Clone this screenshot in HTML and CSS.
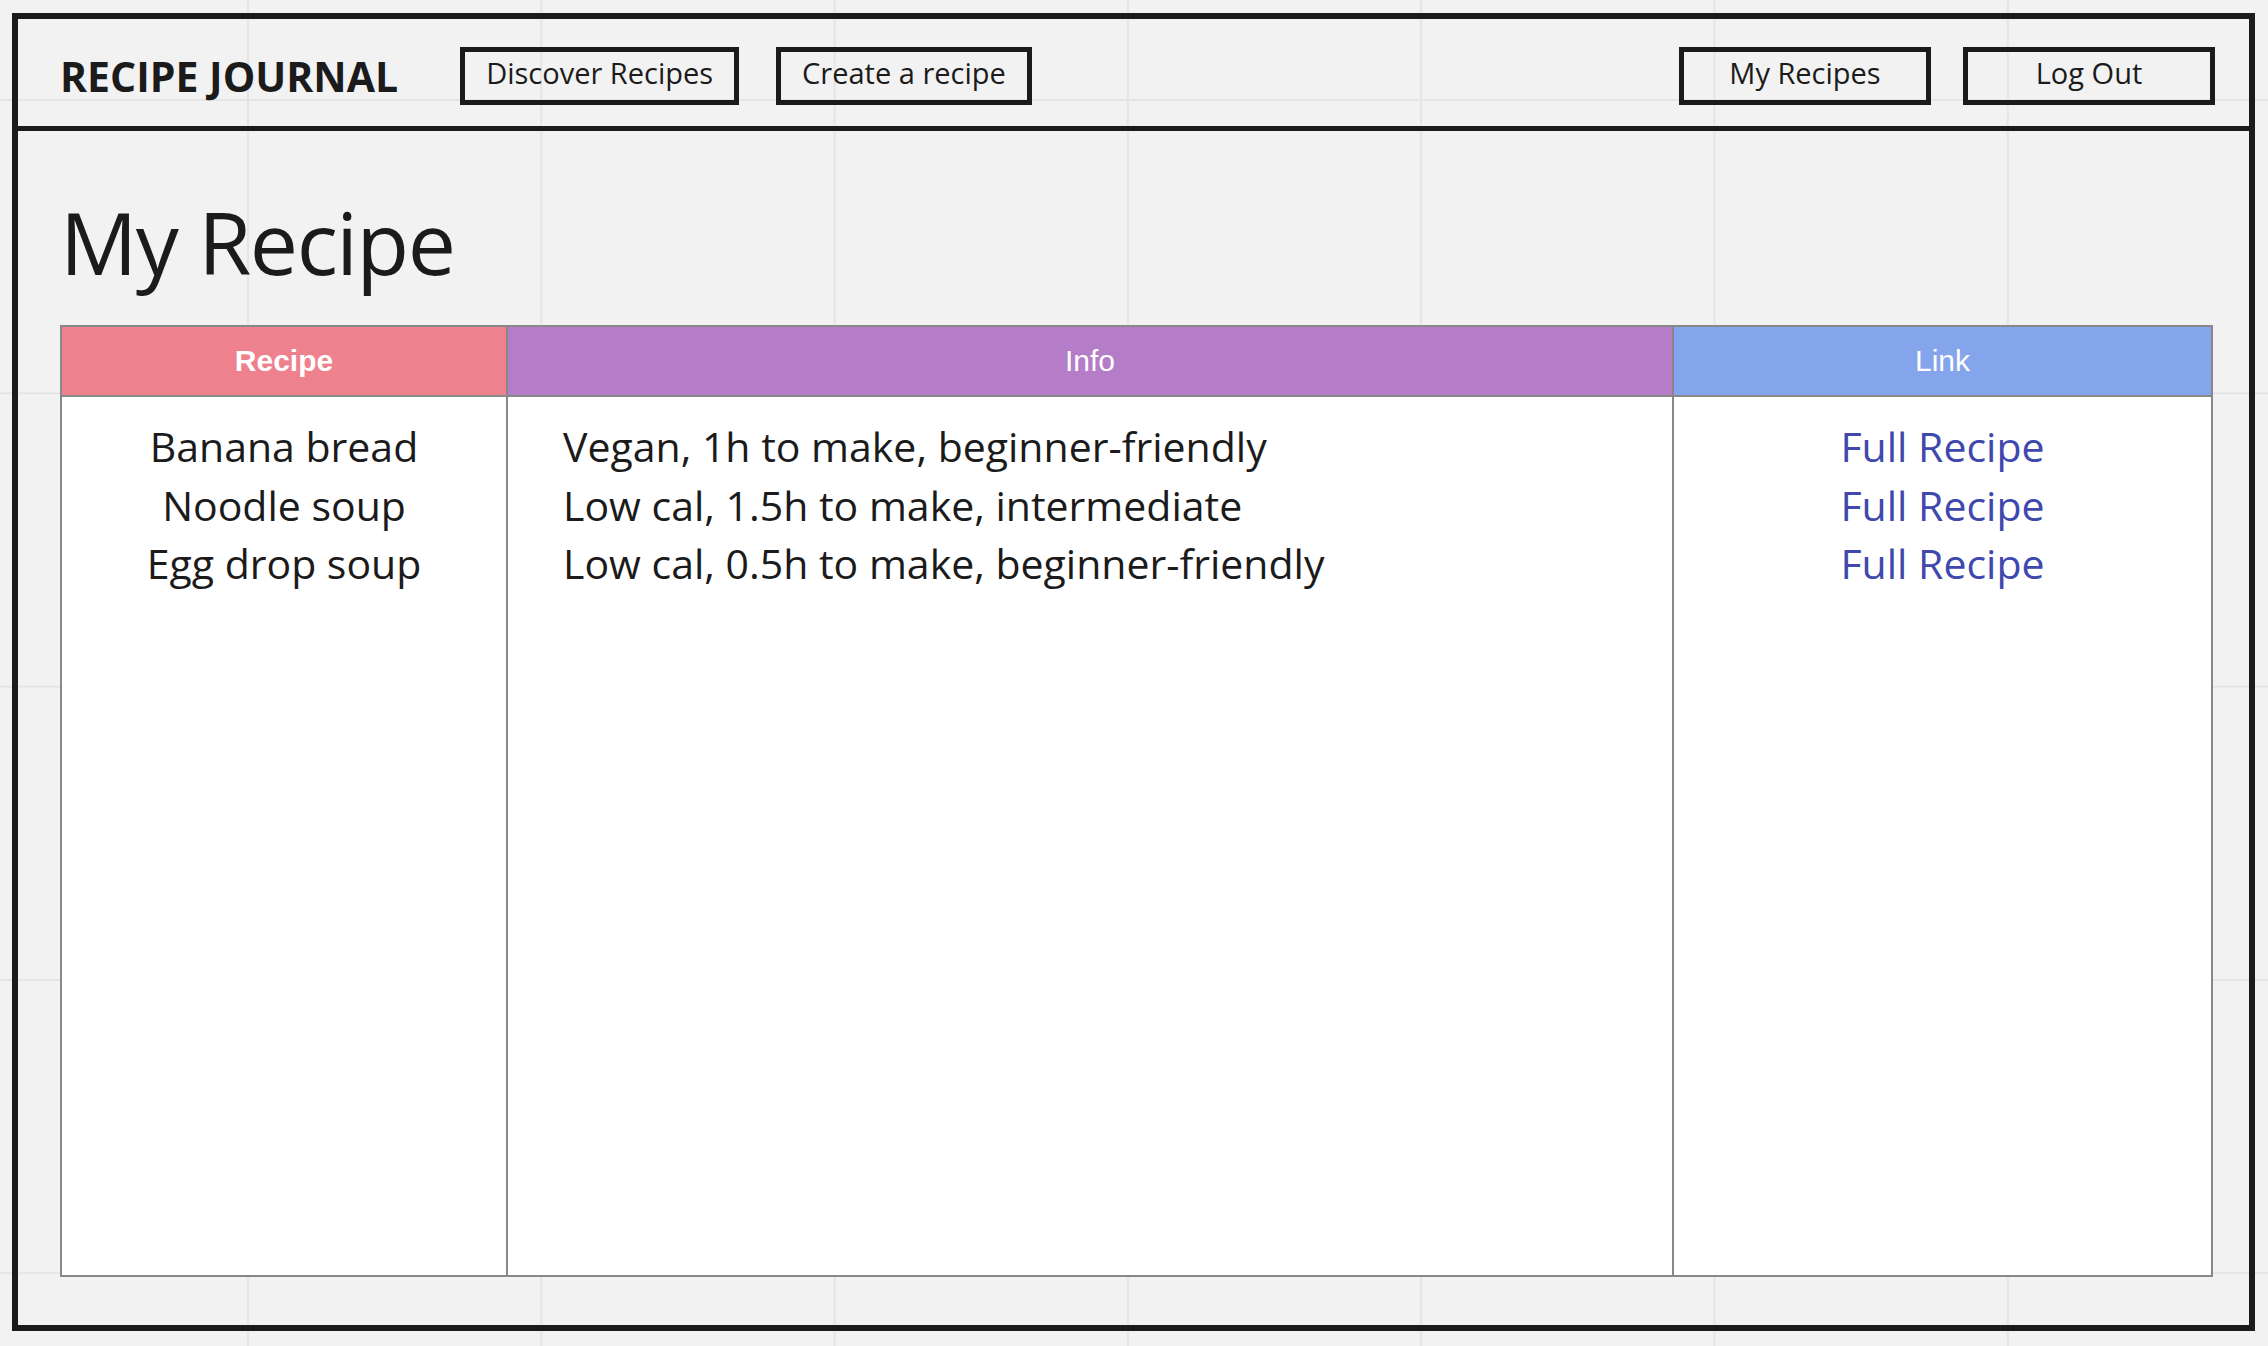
FILE: index.html
```html
<!DOCTYPE html>
<html lang="en">
<head>
<meta charset="utf-8">
<title>Recipe Journal - My Recipe</title>
<link rel="stylesheet" href="styles.css">
</head>
<body>
<div class="frame">
  <header class="topbar">
    <div class="brand">RECIPE JOURNAL</div>
    <nav class="nav nav-main">
      <a class="btn" href="#">Discover Recipes</a>
      <a class="btn" href="#">Create a recipe</a>
    </nav>
    <nav class="nav nav-user">
      <a class="btn" href="#">My Recipes</a>
      <a class="btn" href="#">Log Out</a>
    </nav>
  </header>
  <main class="content">
    <h1 class="page-title">My Recipe</h1>
    <div class="recipes">
      <div class="head head-recipe">Recipe</div>
      <div class="head head-info">Info</div>
      <div class="head head-link">Link</div>
      <div class="cell cell-recipe">
        <div>Banana bread</div>
        <div>Noodle soup</div>
        <div>Egg drop soup</div>
      </div>
      <div class="cell cell-info">
        <div>Vegan, 1h to make, beginner-friendly</div>
        <div>Low cal, 1.5h to make, intermediate</div>
        <div>Low cal, 0.5h to make, beginner-friendly</div>
      </div>
      <div class="cell cell-link">
        <div><a href="#">Full Recipe</a></div>
        <div><a href="#">Full Recipe</a></div>
        <div><a href="#">Full Recipe</a></div>
      </div>
    </div>
  </main>
</div>
</body>
</html>
```
FILE: styles.css
```css
html, body {
  margin: 0;
  padding: 0;
}

body {
  min-height: 1346px;
  background-color: #f2f2f2;
  background-image:
    linear-gradient(90deg, #e5e5e5 2px, transparent 2px),
    linear-gradient(180deg, #e5e5e5 2px, transparent 2px);
  background-size: 293.3px 293.3px;
  background-position: 247px 99px;
  font-family: "Open Sans", "Noto Sans", sans-serif;
  color: #1b1b1b;
}

.frame {
  box-sizing: border-box;
  width: 2243px;
  height: 1318px;
  margin: 13px 0 0 12px;
  border: 6px solid #1b1b1b;
  display: flex;
  flex-direction: column;
}

.topbar {
  box-sizing: border-box;
  height: 112px;
  border-bottom: 5px solid #1b1b1b;
  padding: 28px 34px 0 42px;
  display: flex;
  align-items: flex-start;
}

.brand {
  font-weight: 700;
  font-size: 41px;
  line-height: 58px;
  margin-right: 62px;
  white-space: nowrap;
}

.nav {
  display: flex;
}

.nav-main {
  gap: 37px;
}

.nav-user {
  margin-left: auto;
  gap: 32px;
}

.btn {
  box-sizing: border-box;
  min-width: 252px;
  height: 58px;
  border: 5px solid #1b1b1b;
  padding: 0 21px 6px;
  font-size: 29px;
  line-height: 42px;
  text-align: center;
  color: #1b1b1b;
  text-decoration: none;
  white-space: nowrap;
}

.content {
  flex: 1;
  padding: 67px 36px 0 42px;
}

.page-title {
  margin: 0 0 39px;
  font-weight: 400;
  font-size: 86px;
  line-height: 88px;
  letter-spacing: -1.5px;
}

.recipes {
  box-sizing: border-box;
  height: 952px;
  border: 2px solid #888888;
  background: #ffffff;
  display: grid;
  grid-template-columns: 444px 1166px 1fr;
  grid-template-rows: 70px 1fr;
}

.head {
  box-sizing: border-box;
  border-bottom: 2px solid #888888;
  display: flex;
  align-items: center;
  justify-content: center;
  font-family: "Liberation Sans", Arial, sans-serif;
  font-size: 30px;
  color: #ffffff;
}

.head-recipe {
  background: #ed818e;
  font-weight: 700;
}

.head-info {
  background: #b57cc7;
  border-left: 2px solid #888888;
}

.head-link {
  background: #84a4ec;
  border-left: 2px solid #888888;
}

.cell {
  box-sizing: border-box;
  padding-top: 20px;
  font-size: 41px;
  line-height: 58.5px;
  color: #1b1b1b;
}

.cell-recipe {
  text-align: center;
}

.cell-info {
  border-left: 2px solid #888888;
  padding-left: 55px;
}

.cell-link {
  border-left: 2px solid #888888;
  text-align: center;
}

.cell-link a {
  color: #3f49ad;
  text-decoration: none;
}
```
